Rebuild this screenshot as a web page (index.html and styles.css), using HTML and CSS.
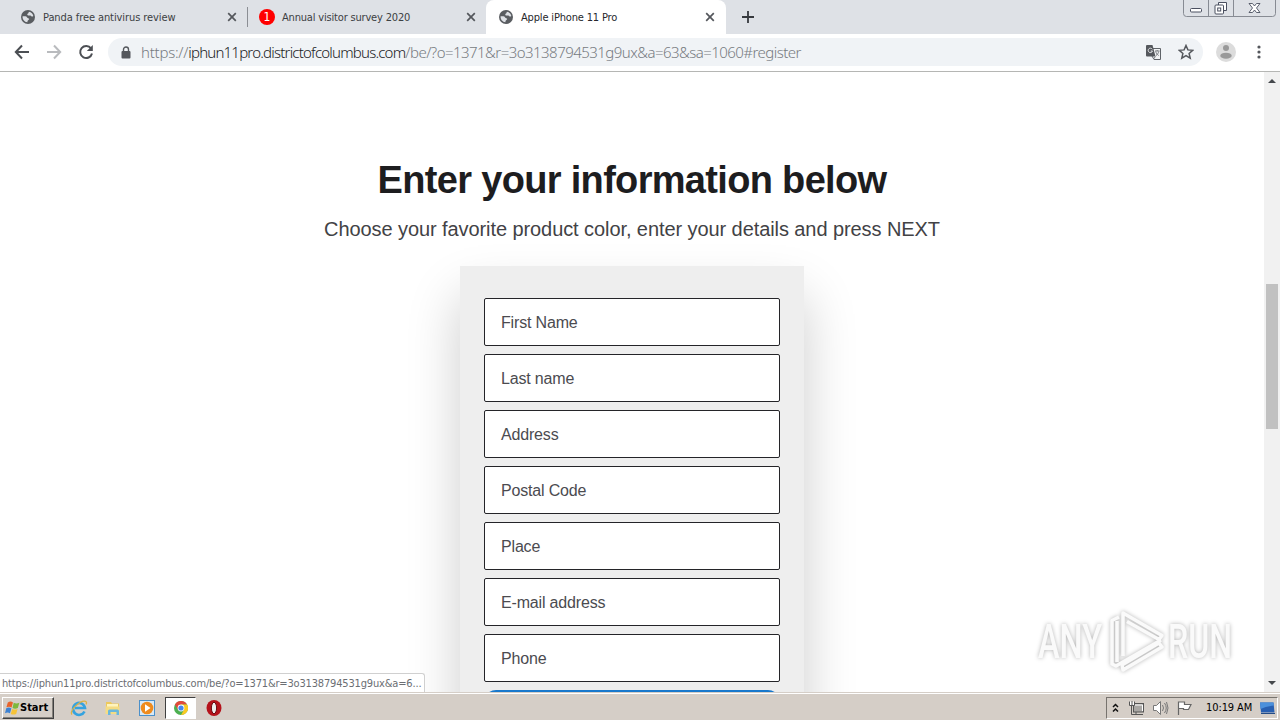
FILE: index.html
```html
<!DOCTYPE html>
<html lang="en">
<head>
  <meta charset="UTF-8">
  <title>Apple iPhone 11 Pro</title>
  <meta name="viewport" content="width=device-width, initial-scale=1.0">
  <link rel="stylesheet" href="styles.css">
</head>
<body>

  <svg class="defs" width="0" height="0">
    <symbol id="globe" viewBox="0 0 14 14">
      <circle cx="7" cy="7" r="7" fill="#5a5d61"/>
      <path d="M1.600 6.200h2.800c1.800 0 1.400 1.800 2.700 2 1.100.1 1.400.7.8 1.400-.6.8-1.500.8-1.500 2.600C3.400 12 1.300 9.300 1.600 6.200zM8 1.700c2.200.3 4 2.100 4.300 4.300-.9.9-2.300.6-2.700-.4H7.500c-1.300 0-1.700-1.400-.6-2.100C7.800 3.200 7.400 2.300 8 1.700z" fill="#dee1e6"/>
    </symbol>
    <symbol id="close" viewBox="0 0 10 10">
      <path d="M1.200 1.200l7.600 7.600M8.800 1.200L1.200 8.800" stroke="#54575c" stroke-width="1.700"/>
    </symbol>
  </svg>

  <!-- tab strip -->
  <div class="tabs">
    <div class="tab tab-first">
      <svg class="favicon"><use href="#globe"/></svg>
      <span class="tab-title t1">Panda free antivirus review</span>
      <svg class="tab-close"><use href="#close"/></svg>
    </div>
    <div class="tab tab-second">
      <span class="badge">1</span>
      <span class="tab-title t2">Annual visitor survey 2020</span>
      <svg class="tab-close"><use href="#close"/></svg>
    </div>
    <div class="tab active">
      <svg class="favicon"><use href="#globe"/></svg>
      <span class="tab-title t3">Apple iPhone 11 Pro</span>
      <svg class="tab-close"><use href="#close"/></svg>
    </div>
    <svg class="new-tab" viewBox="0 0 12 12"><path d="M6 0v12M0 6h12" stroke="#36393e" stroke-width="1.800"/></svg>
    <svg class="win-buttons" viewBox="0 0 94 18">
      <path d="M.5 0v13.500q0 3 3 3h86q3 0 3-3V0M25.500 0v16M50.500 0v16" fill="none" stroke="#878b93"/>
      <rect x="7.500" y="8.500" width="11" height="3.500" rx="1" fill="#fff" stroke="#4b5060"/>
      <path d="M35.500 5V2.500h8v8H41" fill="#fff" stroke="#4b5060"/>
      <rect x="32" y="5" width="8.500" height="9" rx="1" fill="#fff" stroke="#4b5060"/>
      <rect x="34.700" y="8" width="3" height="3" fill="#fff" stroke="#4b5060"/>
      <path d="M66 3.500h3.500l2 2.500 2-2.500H77l-3.500 4.500 3.500 4.500h-3.500l-2-2.500-2 2.500H66l3.500-4.500z" fill="#fff" stroke="#4b5060" stroke-width=".9"/>
    </svg>
  </div>

  <!-- toolbar -->
  <div class="toolbar">
    <svg class="nav-icon" viewBox="0 0 16 16"><path d="M15 8H2M8 1.500L1.800 8 8 14.500" fill="none" stroke="#4c4f54" stroke-width="2"/></svg>
    <svg class="nav-icon" viewBox="0 0 16 16"><path d="M1 8h13M8 1.500L14.200 8 8 14.500" fill="none" stroke="#b9bbbe" stroke-width="2"/></svg>
    <svg class="nav-icon" viewBox="0 0 16 16"><path d="M13 4.400A6 6 0 1 0 14 9.500" fill="none" stroke="#4c4f54" stroke-width="2"/><path d="M14.800 1v6h-6z" fill="#4c4f54"/></svg>
    <div class="address">
      <svg class="lock" viewBox="0 0 10 13"><path d="M2.500 6V3.500a2.500 2.500 0 0 1 5 0V6" fill="none" stroke="#54575c" stroke-width="1.400"/><rect x=".5" y="5" width="9" height="7.500" rx="1" fill="#54575c"/></svg>
      <div class="url"><span class="scheme">https://</span><span class="host">iphun11pro.districtofcolumbus.com</span><span class="path">/be/?o=1371&amp;r=3o3138794531g9ux&amp;a=63&amp;sa=1060#register</span></div>
      <svg class="translate" viewBox="0 0 15 15">
        <path d="M6 3.500h8.500v11H8L6 11z" fill="#f1f3f4" stroke="#5f6368"/>
        <path d="M0 1q0-1 1-1h5.500l3 11.500H1q-1 0-1-1z" fill="#55585d"/>
        <path d="M6.300 4.300A2.200 2.200 0 1 0 6.500 6H4.700" fill="none" stroke="#e4e6e9"/>
        <path d="M9 6h4.500M11.200 5v1M9.700 6.500c.5 1.800 1.500 3 3 4M12.700 6.500c-.3 1.500-1.200 3-2.700 4M7.500 14l2-2.500" fill="none" stroke="#777a7f"/>
      </svg>
      <svg class="star" viewBox="0 0 16 16"><path d="M8 1.500l1.900 4.400 4.800.4-3.600 3.200 1.100 4.700L8 11.700l-4.200 2.500 1.100-4.700L1.300 6.300l4.800-.4z" fill="none" stroke="#54575c" stroke-width="1.500"/></svg>
    </div>
    <svg class="avatar" viewBox="0 0 20 20"><circle cx="10" cy="10" r="10" fill="#dcdcdc"/><circle cx="10" cy="6" r="3" fill="#999"/><ellipse cx="10" cy="13.700" rx="5.700" ry="3" fill="#999"/></svg>
    <svg class="menu" viewBox="0 0 4 14"><circle cx="2" cy="2" r="1.600" fill="#54575c"/><circle cx="2" cy="7" r="1.600" fill="#54575c"/><circle cx="2" cy="12" r="1.600" fill="#54575c"/></svg>
  </div>

  <!-- page -->
  <div class="viewport">
    <main class="page">
      <h1>Enter your information below</h1>
      <p class="lead">Choose your favorite product color, enter your details and press NEXT</p>
      <form class="card">
        <div class="field">First Name</div>
        <div class="field">Last name</div>
        <div class="field">Address</div>
        <div class="field">Postal Code</div>
        <div class="field">Place</div>
        <div class="field">E-mail address</div>
        <div class="field">Phone</div>
        <div class="next"></div>
      </form>
    </main>
    <div class="scrollbar">
      <svg class="arrow" viewBox="0 0 8 4"><path d="M0 4l4-4 4 4z" fill="#45484c"/></svg>
      <div class="thumb"></div>
      <svg class="arrow" viewBox="0 0 8 4"><path d="M0 0h8L4 4z" fill="#45484c"/></svg>
    </div>
    <div class="status">https://iphun11pro.districtofcolumbus.com/be/?o=1371&amp;r=3o3138794531g9ux&amp;a=6...</div>
    <svg class="watermark" viewBox="0 0 230 80">
      <g class="mark-text">
        <text x="8" y="54" textLength="64" lengthAdjust="spacingAndGlyphs">ANY</text>
        <text x="138" y="54" textLength="64" lengthAdjust="spacingAndGlyphs">RUN</text>
      </g>
      <g class="mark-logo">
        <path d="M93 52V9l39 22.500-3 4L97 17.500"/>
        <path d="M89 13l-7 3.500V60l4 2 45-26"/>
        <path d="M87 17v41"/>
        <path d="M93 66l39-23-3-4-37 22z"/>
      </g>
    </svg>
  </div>

  <!-- taskbar -->
  <div class="taskbar">
    <div class="start">
      <svg class="flag" viewBox="0 0 16 16">
        <path d="M3 2q3-2 5.500 0L7 7.500Q4.500 5.800 1.500 7.300z" fill="#e8632b"/>
        <path d="M9.300 2.500q3 1.500 6 0L13.700 8q-3 1.400-5.700 0z" fill="#7eb83c"/>
        <path d="M1.300 8.300q3-1.500 5.500.2l-1.500 5.200Q3 12 0 13.500z" fill="#3d82d3"/>
        <path d="M7.700 9q3 1.400 5.700 0l-1.500 5.300q-3 1.500-5.800 0z" fill="#f6c338"/>
      </svg>
      <span>Start</span>
    </div>
    <svg class="task-icon" viewBox="0 0 18 18">
      <path d="M14.500 12.500A6 6 0 1 1 15 9H5" fill="none" stroke="#35a3df" stroke-width="2.600"/>
      <path d="M2 15.500C-1 12 10 1 15.500 2.300c1.500.4 1 2.200.5 3" fill="none" stroke="#ddb243" stroke-width="1.300"/>
    </svg>
    <svg class="task-icon" viewBox="0 0 18 18">
      <path d="M2 3h5l1 1.500h7V15H2z" fill="#edc95c"/>
      <path d="M3 5h11v4H3z" fill="#fff4bd"/>
      <path d="M1.500 7.500h14V15h-14z" fill="#f5dc83"/>
      <path d="M4 16v-4q0-1.500 1.500-1.500h8q1.500 0 1.500 1.500v4h-2.500v-3h-6v3z" fill="#69b7dc"/>
    </svg>
    <svg class="task-icon" viewBox="0 0 18 18">
      <rect x="1.500" y="1.500" width="15" height="15" fill="#d8e9f6" stroke="#4b90ca"/>
      <circle cx="9" cy="9" r="6.300" fill="#ef8b1d"/><path d="M7 5.300l5.500 3.700L7 12.700z" fill="#fff"/>
    </svg>
    <div class="task-active">
      <svg class="chrome" viewBox="0 0 14 14">
        <circle cx="7" cy="7" r="7" fill="#4caf50"/>
        <path d="M.9 3.500A7 7 0 0 1 13.100 3.500H7L4 8.700z" fill="#e2493b"/>
        <path d="M13.100 3.500A7 7 0 0 1 7 14l3-5.200L7 3.500z" fill="#fbc922"/>
        <circle cx="7" cy="7" r="3.400" fill="#fff"/><circle cx="7" cy="7" r="2.600" fill="#4387ed"/>
      </svg>
    </div>
    <svg class="task-icon" viewBox="0 0 18 18">
      <ellipse cx="9" cy="9" rx="7.500" ry="8" fill="#b5121b"/><ellipse cx="9" cy="9" rx="2.600" ry="5.700" fill="#eee" stroke="#680a10"/>
    </svg>
    <div class="tray">
      <svg class="chevrons" viewBox="0 0 7 10"><path d="M1 4l2.500-2.500L6 4M1 8.500L3.500 6 6 8.500" fill="none" stroke="#111" stroke-width="1.500"/></svg>
      <svg class="tray-icon" viewBox="0 0 17 16">
        <rect x="5.500" y="3.500" width="10" height="8.500" fill="#a9a7a4" stroke="#555"/>
        <path d="M3.500 5v9.500h11.500M8 14v-2" fill="none" stroke="#555"/>
        <path d="M1.500 1.500v4h5v-4M4 1v4" fill="#fff" stroke="#555"/>
        <path d="M7 5h7.500v6" fill="none" stroke="#fff"/>
      </svg>
      <svg class="tray-icon" viewBox="0 0 17 16"><path d="M1.500 5.500h3l4-4v13l-4-4h-3z" fill="#fff" stroke="#777"/><path d="M10.500 5q2 3 0 6M12.500 3q3.500 5 0 10M14.500 2q3 6 0 12" fill="none" stroke="#777"/></svg>
      <svg class="tray-icon" viewBox="0 0 17 16"><path d="M2.500 15V1.500M2.500 2h6v2.500h6.500L12.500 9.500h-5v-1h-5" fill="#fff" stroke="#666" stroke-width="1.200"/></svg>
      <span class="clock">10:19 AM</span>
      <svg class="desktop" viewBox="0 0 16 14"><path d="M1 1.500h13.500l1 10H2z" fill="#285fb1"/><path d="M1 1.500h13.500l.3 3Q7 5 1.500 8z" fill="#4b90dc"/><path d="M2 12.500h14" stroke="#244c86"/></svg>
    </div>
  </div>

</body>
</html>
```
FILE: styles.css
```css
/* ==== Reset & Base ==== */
* { margin:0; padding:0; box-sizing:border-box; }
html, body { height:100%; width:100%; overflow:hidden; }
body {
  display:flex; flex-direction:column;
  background:#fff;
  font-family:"DejaVu Sans Condensed", "DejaVu Sans", sans-serif;
  font-stretch:condensed;
}
svg { display:block; flex:none; }
.defs { position:absolute; }

/* ==== Tabs ==== */
.tabs { display:flex; height:34px; flex:none; background:#dee1e6; }
.tab { display:flex; align-items:center; height:34px; }
.tab-first { width:247px; padding:0 10px 0 21px; }
.tab-second { width:239px; padding:0 10px 0 12px; position:relative; }
.tab-second::before { content:""; position:absolute; left:0; top:7px; height:20px; width:1px; background:#8b8e94; }
.active { width:240px; padding:0 11px 0 13px; background:#fff; border-radius:8px 8px 0 0; }
.favicon { width:14px; height:14px; margin-right:8px; }
.badge {
  width:16px; height:16px; margin-right:7px; border-radius:50%;
  background:#f00; color:#fff; font-size:12px; line-height:16px; text-align:center;
}
.tab-title { flex:1; font-size:11px; color:#3c4043; white-space:nowrap; }
.t1 { letter-spacing:-.09px; }
.t2 { letter-spacing:-.18px; }
.t3 { letter-spacing:-.17px; color:#26282b; }
.tab-close { width:10px; height:10px; }
.new-tab { width:12px; height:12px; margin:11px 0 0 16px; }
.win-buttons { width:94px; height:18px; margin-left:auto; margin-right:3px; }

/* ==== Toolbar ==== */
.toolbar {
  display:flex; align-items:center; height:38px; flex:none;
  padding:0 20px 1px 14px; border-bottom:1px solid #b5b6b4;
}
.nav-icon { width:16px; height:16px; margin-right:16px; }
.address {
  display:flex; align-items:center; flex:none; width:1095px; height:28px;
  margin-left:-2px; padding:0 9px 0 13px;
  background:#f0f3f6; border-radius:14px;
}
.lock { width:10px; height:13px; margin-right:10px; }
.url {
  flex:1; padding-bottom:1px; white-space:nowrap; color:#777b81;
  font-family:"Noto Sans", sans-serif; font-weight:300; font-stretch:normal; font-size:15px;
}
.scheme { letter-spacing:-.25px; }
.host { color:#202124; letter-spacing:-.79px; }
.path { letter-spacing:-.54px; }
.translate { width:15px; height:15px; margin-right:17px; }
.star { width:16px; height:16px; }
.avatar { width:20px; height:20px; margin-left:13px; }
.menu { width:4px; height:14px; margin-left:21px; }

/* ==== Page ==== */
.viewport { position:relative; display:flex; flex:1; min-height:0; overflow:hidden; }
.page {
  display:flex; flex-direction:column; align-items:center; flex:1;
  padding-top:85px; overflow:hidden; font-family:"Liberation Sans", Arial, sans-serif;
}
h1 { font-size:38px; line-height:46px; letter-spacing:-.68px; color:#1d1d1f; white-space:nowrap; }
.lead { margin-top:15px; font-size:20px; line-height:22px; letter-spacing:-.08px; color:#424245; white-space:nowrap; }
.card {
  flex:none; width:344px; height:520px; margin-top:26px; padding:32px 24px;
  display:flex; flex-direction:column; gap:8px;
  background:#eee; box-shadow:0 30px 50px rgba(0,0,0,.2);
}
.field {
  flex:none; height:48px; padding-left:16px; line-height:47px; letter-spacing:-.17px;
  font-size:16px; color:#4b4b50; background:#fff; border:1px solid #242428; border-radius:2px;
}
.next { flex:none; height:40px; border-radius:12px; background:#1878cc; }

.scrollbar {
  display:flex; flex-direction:column; align-items:center; justify-content:space-between;
  width:16px; padding:7px 0; background:#f1f1f1;
}
.thumb { width:12px; height:145px; margin-bottom:51px; background:#c1c1c1; }
.arrow { width:8px; height:4px; }

/* ==== Overlays ==== */
.status {
  position:absolute; left:0; bottom:0; width:425px; height:19px; padding-left:2px;
  line-height:19px; font-size:11px; letter-spacing:-.17px; color:#6b6e73; white-space:nowrap;
  background:#fff; border:1px solid #d0d0d0; border-width:1px 1px 0 0; border-radius:0 3px 0 0;
}
.watermark { position:absolute; left:1030px; top:532px; width:230px; height:80px; filter:drop-shadow(0 0 2px rgba(0,0,0,.3)); }
.mark-text { font:500 48px Roboto, sans-serif; fill:#fafafa; }
.mark-logo path { fill:none; stroke:#fafafa; stroke-width:3.500; stroke-linejoin:round; }

/* ==== Taskbar ==== */
.taskbar {
  display:flex; align-items:center; height:28px; flex:none; padding:2px 2px 0;
  background:#d5cec7; border-top:1px solid #d5cec7; box-shadow:inset 0 1px #fff;
}
.start {
  display:flex; align-items:center; width:52px; height:22px; padding-left:2px; margin-right:16px;
  border:1px solid; border-color:#fff #404040 #404040 #fff; box-shadow:inset -1px -1px #85817b;
  font-size:11px; font-weight:bold; color:#000;
}
.flag { width:15px; height:16px; }
.task-icon { width:18px; height:18px; margin-right:16px; }
.task-active {
  display:flex; align-items:center; justify-content:center; width:31px; height:22px; margin:0 9px 0 -7px;
  background:#fff; border:1px solid; border-color:#404040 #fff #fff #404040;
}
.chrome { width:14px; height:14px; }
.tray {
  display:flex; align-items:center; width:172px; height:22px; margin-left:auto; padding-left:5px;
  border:1px solid; border-color:#77736e #fff #fff #77736e;
}
.chevrons { width:7px; height:10px; margin-right:9px; }
.tray-icon { width:17px; height:16px; margin-right:7px; }
.clock { width:48px; margin-left:6px; font-size:11px; letter-spacing:-.1px; color:#000; white-space:nowrap; }
.desktop { width:16px; height:14px; margin-left:5px; }
```
